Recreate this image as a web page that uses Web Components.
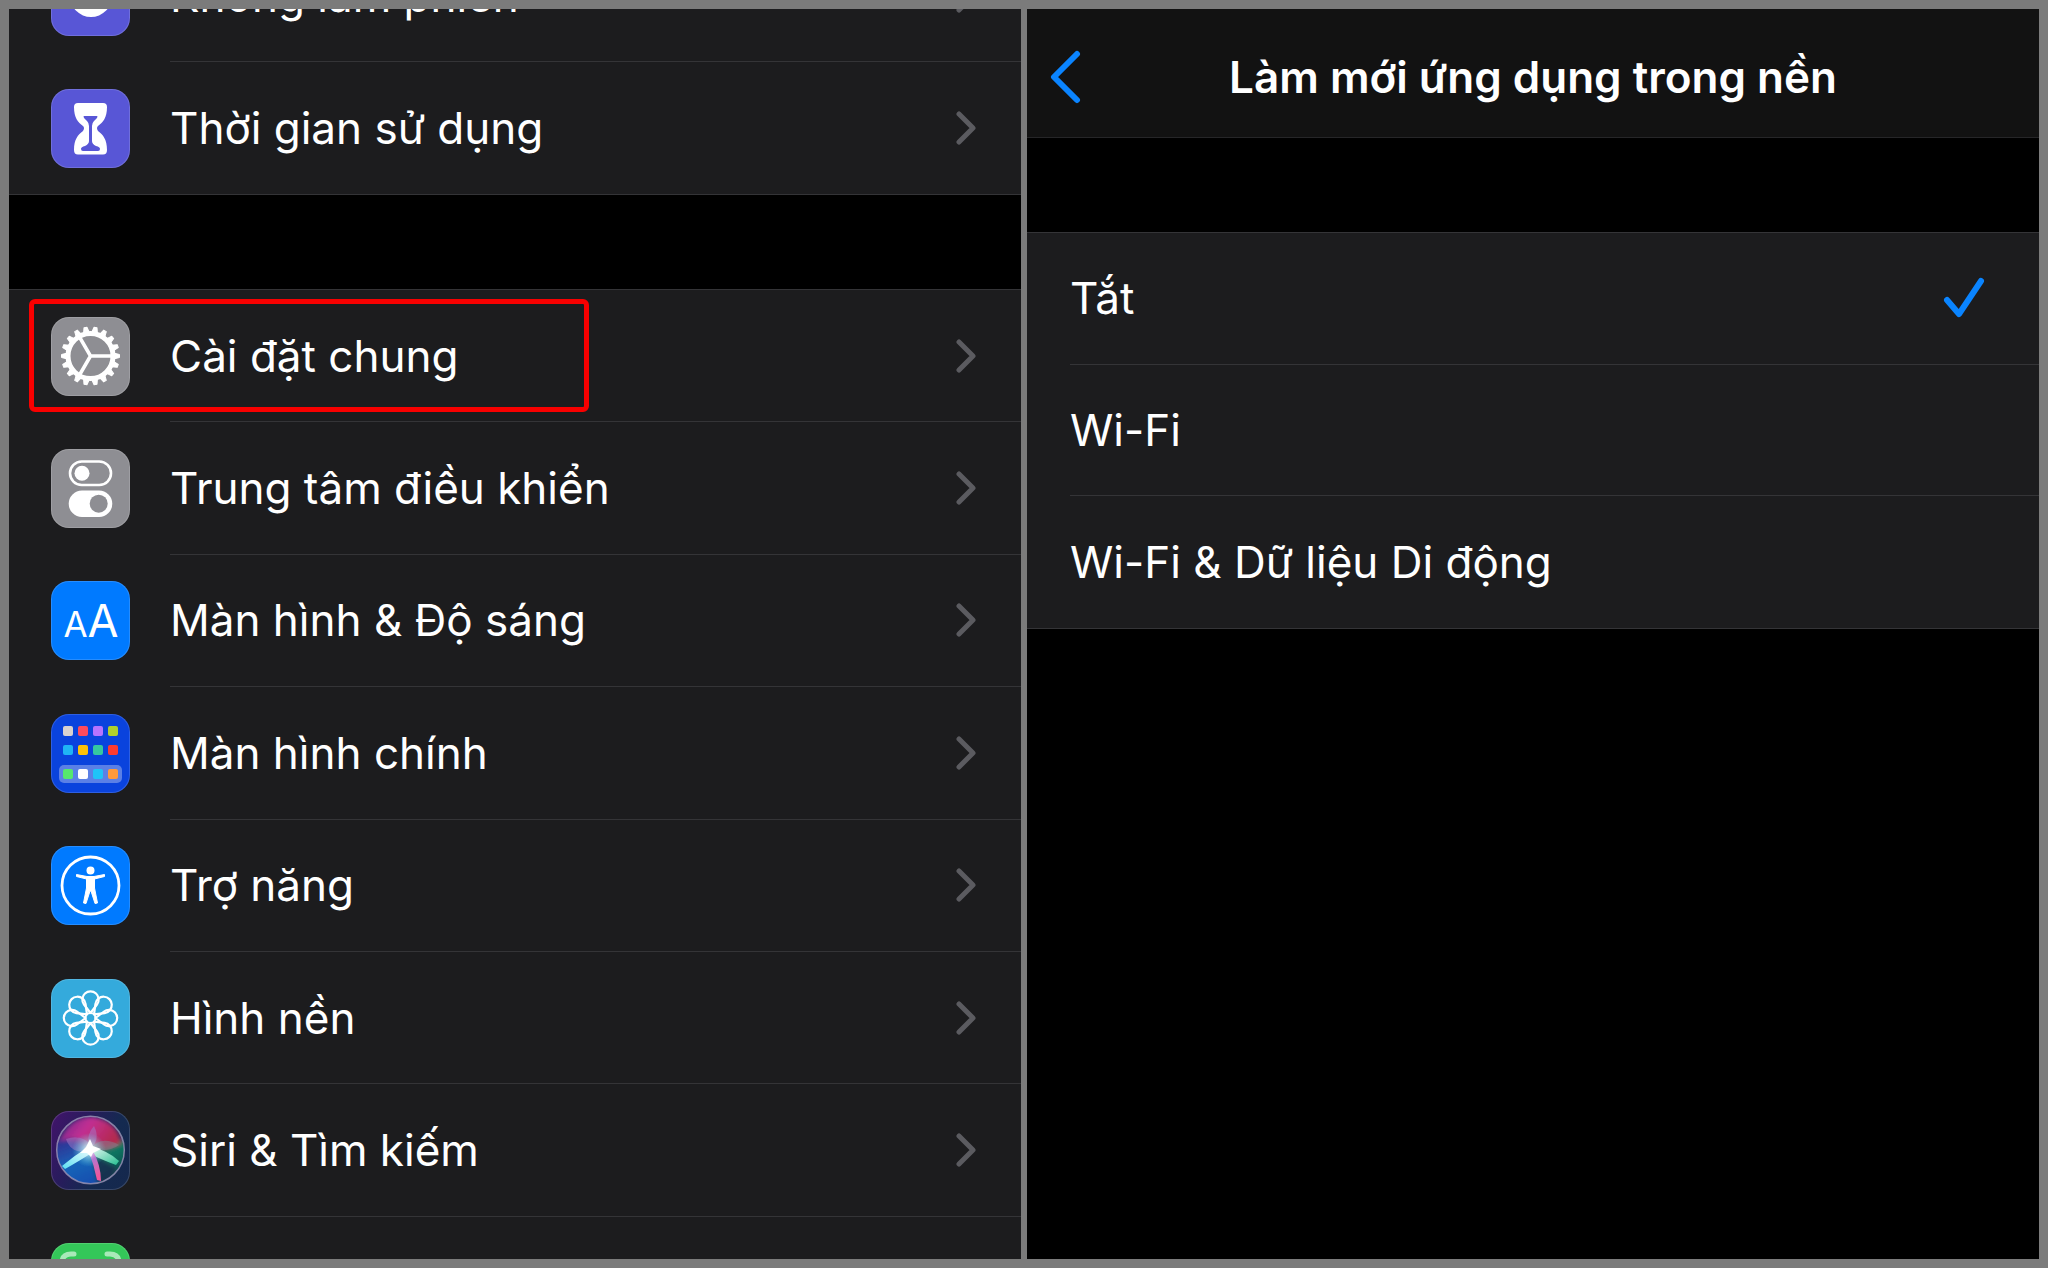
<!DOCTYPE html>
<html lang="vi">
<head>
<meta charset="utf-8">
<meta name="viewport" content="width=device-width, initial-scale=1">
<title>Cài đặt</title>
<style>
  html, body { margin: 0; height: 100%; }
  body {
    background: #7b7b7b;
    color: #fff;
    font-family: Inter, "Noto Sans", sans-serif;
    font-size: 44px;
    line-height: 54px;
  }
</style>
</head>
<body>
<split-view>
  <phone-screen>
    <row-group class="scrolled">
      <settings-row icon="moon">Không làm phiền</settings-row>
      <settings-row icon="hourglass">Thời gian sử dụng</settings-row>
    </row-group>
    <row-group class="long">
      <settings-row icon="gear" marked>Cài đặt chung</settings-row>
      <settings-row icon="toggles">Trung tâm điều khiển</settings-row>
      <settings-row icon="display">Màn hình &amp; Độ sáng</settings-row>
      <settings-row icon="home">Màn hình chính</settings-row>
      <settings-row icon="access">Trợ năng</settings-row>
      <settings-row icon="flower">Hình nền</settings-row>
      <settings-row icon="siri">Siri &amp; Tìm kiếm</settings-row>
      <settings-row icon="scan"></settings-row>
    </row-group>
  </phone-screen>
  <phone-screen>
    <nav-bar>Làm mới ứng dụng trong nền</nav-bar>
    <row-group class="short">
      <choice-row checked>Tắt</choice-row>
      <choice-row>Wi-Fi</choice-row>
      <choice-row>Wi-Fi &amp; Dữ liệu Di động</choice-row>
    </row-group>
  </phone-screen>
</split-view>

<script>
const define = (name, html, setup) => customElements.define(name, class extends HTMLElement {
  constructor() {
    super();
    this.attachShadow({ mode: 'open' }).innerHTML = html;
  }
  connectedCallback() {
    if (setup && !this.ready) setup(this, this.shadowRoot);
    this.ready = true;
  }
});

const around = (n, draw) => Array.from({ length: n }, (_, i) => draw(i * 360 / n)).join('');

const homeColors = [
  ['#d9d2d0', '#ff4b5c', '#b673ff', '#b0d02c'],
  ['#1fb4f5', '#ffc107', '#35c8a0', '#ff3b30'],
  ['#56e86e', '#ffffff', '#1fc3f8', '#ff9a3c']
];

const icons = {
  moon: ['#5856d6', `<circle cx="40" cy="39" r="21" fill="#fff"/><circle cx="50" cy="27" r="17" fill="#5856d6"/>`],
  hourglass: ['#5856d6', `
    <path fill="#fff" d="M27 14H52Q56 14 56 18C56 29 52 33 47 37Q45 39 47 42C52 46 56 50 56 61Q56 65.500 52 65.500H27Q23 65.500 23 61C23 50 27 46 32 42Q34 39 32 37C27 33 23 29 23 18Q23 14 27 14Z"/>
    <path fill="#5856d6" d="M33 27H46Q47 27 46 29L43 32Q41 34 41 37V52Q41 55 45 57Q49 58 49 60Q49 62 47 62H32Q30 62 30 60Q30 58 34 57Q38 55 38 52V37Q38 34 36 32L33 29Q32 27 33 27Z"/>`],
  gear: ['#8e8e93', `
    <g transform="translate(39.500 39)" fill="none" stroke="#fff">
      <circle r="22.500" stroke-width="5"/>
      <path stroke-width="3.500" d="M0 0H22M0 0L-11 -19M0 0L-11 19"/>
      ${around(18, a => `<path transform="rotate(${a})" fill="#fff" stroke-width="1" stroke-linejoin="round" d="M23 -3L29 -1.500V1.500L23 3Z"/>`)}
    </g>`],
  toggles: ['#8e8e93', `
    <rect x="19" y="12.500" width="41" height="23.500" rx="11.750" fill="none" stroke="#fff" stroke-width="2.600"/>
    <circle cx="31" cy="24.200" r="7.500" fill="#fff"/>
    <rect x="17.700" y="41.500" width="43.600" height="26.500" rx="13.250" fill="#fff"/>
    <circle cx="47.700" cy="54.700" r="9" fill="#8e8e93"/>`],
  display: ['#007aff', `
    <g fill="#fff" font-family="Inter, sans-serif" font-weight="400" text-anchor="middle">
      <text x="24.500" y="56" font-size="35">A</text><text x="52" y="56" font-size="45">A</text>
    </g>`],
  home: ['#0a43dd', `
    <rect x="8" y="51" width="63" height="18" rx="5" fill="#5b80e6"/>
    ${homeColors.map((row, r) => row.map((c, i) =>
      `<rect x="${[12, 27, 42, 57][i]}" y="${[12, 31, 55][r]}" width="10" height="10" rx="2" fill="${c}"/>`).join('')).join('')}`],
  access: ['#007aff', `
    <circle cx="39.500" cy="39.500" r="28.500" fill="none" stroke="#fff" stroke-width="2.800"/>
    <circle cx="39.500" cy="24.500" r="4" fill="#fff"/>
    <path fill="#fff" stroke="#fff" stroke-linejoin="round" d="M25.500 28.500L36 30.500H43L53.500 28.500V30.500L43.500 33V42L46.500 57L44 57.500L40 45H39L35 57.500L32.500 57L35.500 42V33L25.500 30.500Z"/>`],
  flower: ['#34aadc', `
    <g transform="translate(39.500 39)" fill="none" stroke="#fff" stroke-width="2.200" stroke-linejoin="round">
      <circle r="5"/>
      ${around(8, a => `<path transform="rotate(${a})" d="M0 -5L-6.500 -13.500A8.200 8.200 0 1 1 6.500 -13.500Z"/>`)}
    </g>`],
  siri: ['linear-gradient(115deg, #43136b 0%, #281c5c 35%, #142a50 65%, #15284d 100%)', `
    <defs>
      <radialGradient id="glow"><stop offset="0" stop-color="#fff"/><stop offset=".3" stop-color="#c8fff8" stop-opacity=".8"/><stop offset="1" stop-color="#58d8e8" stop-opacity="0"/></radialGradient>
      <linearGradient id="top" x1="0" x2="1" y2=".4"><stop offset="0" stop-color="#6a2590"/><stop offset=".5" stop-color="#c22f92"/><stop offset="1" stop-color="#b32a4f"/></linearGradient>
      <linearGradient id="left" x1=".2" x2=".6" y2="1"><stop offset="0" stop-color="#352a8e"/><stop offset=".5" stop-color="#1764b8"/><stop offset="1" stop-color="#1647ac"/></linearGradient>
      <linearGradient id="right" x2=".6" y2="1"><stop offset="0" stop-color="#5c6b73"/><stop offset=".4" stop-color="#0d7560"/><stop offset="1" stop-color="#16233f"/></linearGradient>
      <linearGradient id="ray" x1="1" x2="0" y2="1"><stop offset="0" stop-color="#fff"/><stop offset="1" stop-color="#59dff2"/></linearGradient>
      <linearGradient id="leaf" x2="1" y2="1"><stop offset="0" stop-color="#fff"/><stop offset="1" stop-color="#25bf8f"/></linearGradient>
      <linearGradient id="tail" x2=".3" y2="1"><stop offset="0" stop-color="#fff"/><stop offset=".4" stop-color="#b477cf"/><stop offset="1" stop-color="#f0569c"/></linearGradient>
      <filter id="wide" x="-20%" y="-20%" width="140%" height="140%"><feGaussianBlur stdDeviation="2"/></filter>
      <filter id="fine" x="-20%" y="-20%" width="140%" height="140%"><feGaussianBlur stdDeviation=".6"/></filter>
      <clipPath id="orb"><circle cx="39.500" cy="39" r="33.500"/></clipPath>
    </defs>
    <g clip-path="url(#orb)">
      <rect width="79" height="79" fill="#252b68"/>
      <g filter="url(#wide)">
        <path fill="url(#left)" d="M-6 30Q20 24 39 38L50 85H-6Z"/>
        <path fill="url(#right)" d="M39 38Q56 24 85 32V85H49Z"/>
        <path fill="#18294f" opacity=".8" d="M41 42L66 57L56 77L48 75Z"/>
        <path fill="url(#top)" d="M8 30Q20 4 43 6Q67 11 70 32Q57 38 39 38Q28 24 8 30Z"/>
      </g>
      <g filter="url(#fine)">
        <path fill="#a478c8" opacity=".5" d="M15 28Q33 22 43 38Q21 46 15 28ZM39 39Q34 25 43 15Q50 28 39 39Z"/>
        <path fill="#8a7488" opacity=".6" d="M39 38Q50 24 68 34Q57 42 39 38Z"/>
        <circle cx="38" cy="39" r="17" fill="url(#glow)" opacity=".8"/>
        <path fill="url(#ray)" d="M39 35Q24 44 11 55L14 58Q30 49 42 41Z"/>
        <path fill="url(#leaf)" d="M38 35Q58 40 68 50L65 54Q49 48 37 42Z"/>
        <path fill="url(#tail)" d="M37 38Q43 54 46 69L50 70Q50 54 41 38Z"/>
        <path fill="#fff" d="M39 28L42 35L50 38L42 42L40 46L36 42L29 42L35 36Z"/>
      </g>
    </g>
    <circle cx="39.500" cy="39" r="33.800" fill="none" stroke="#a7a0c0" stroke-opacity=".75" stroke-width="1.500"/>`],
  scan: ['#34c759', `
    <path fill="none" stroke="#a9e9b9" stroke-width="5" stroke-linecap="round" d="M23 11H20Q11 11 11 20V24M56 11H59Q68 11 68 20V24M11 55V59Q11 68 20 68H23M68 55V59Q68 68 59 68H56"/>`]
};

define('split-view', `<style>
  :host { box-sizing: border-box; display: grid; grid-template-columns: 1fr 1fr; gap: 6px; height: 100vh; padding: 9px; }
</style><slot></slot>`);

define('phone-screen', `<style>
  :host { display: flex; flex-direction: column; gap: 94px; min-width: 0; overflow: hidden; background: #000; }
</style><slot></slot>`);

define('row-group', `<style>
  :host { box-sizing: border-box; flex: none; display: grid; grid-auto-rows: 1fr; background: #1c1c1e; border: solid #343437; border-width: 1px 0; }
  :host(.scrolled) { height: 266px; margin-top: -80px; }
  :host(.long) { height: 1061px; }
  :host(.short) { height: 397px; }
</style><slot></slot>`);

define('app-icon', `<style>
  :host { display: block; width: 79px; height: 79px; border-radius: 18px; overflow: hidden; box-shadow: inset 0 0 0 1px rgba(255, 255, 255, .15); }
  svg { display: block; width: 100%; height: 100%; }
</style>`, (el, root) => {
  const [fill, drawing] = icons[el.getAttribute('name')];
  el.style.background = fill;
  root.innerHTML += `<svg viewBox="0 0 79 79" aria-hidden="true">${drawing}</svg>`;
});

define('settings-row', `<style>
  :host { display: grid; position: relative; }
  a { display: flex; align-items: center; gap: 40px; padding-left: 42px; color: inherit; text-decoration: none; }
  .body { flex: 1; align-self: stretch; display: flex; align-items: center; justify-content: space-between; padding-right: 44px; border-bottom: 1px solid #343437; }
  :host(:last-of-type) .body { border-color: transparent; }
  svg { width: 21px; height: 34px; fill: none; stroke: #5b5b60; stroke-width: 5; stroke-linecap: round; stroke-linejoin: round; }
  .mark { display: none; }
  :host([marked]) .mark { display: block; position: absolute; box-sizing: border-box; left: 20px; top: 9px; width: 560px; height: 113px; border: 5px solid #f80000; border-radius: 6px; pointer-events: none; }
</style>
<a href="#"><span class="body"><span><slot></slot></span><svg viewBox="0 0 21 34" aria-hidden="true"><path d="M3 3L17 17L3 31"/></svg></span></a>
<span class="mark"></span>`, (el, root) => {
  const icon = document.createElement('app-icon');
  icon.setAttribute('name', el.getAttribute('icon'));
  root.querySelector('a').prepend(icon);
});

define('nav-bar', `<style>
  :host { box-sizing: border-box; display: grid; grid-template-columns: 80px 1fr 80px; align-items: center; height: 129px; padding-top: 8px; background: #121212; border-bottom: 1px solid #262628; }
  button { justify-self: start; margin: 0 0 0 21px; padding: 0; border: 0; background: none; }
  svg { display: block; width: 34px; height: 54px; fill: none; stroke: #0a84ff; stroke-width: 6; stroke-linecap: round; stroke-linejoin: round; }
  h1 { margin: 0; font-size: inherit; font-weight: 600; text-align: center; white-space: nowrap; }
</style>
<button type="button" aria-label="Quay lại"><svg viewBox="0 0 34 54"><path d="M29 4L6 27L29 50"/></svg></button>
<h1><slot></slot></h1>`);

define('choice-row', `<style>
  :host { display: grid; padding-left: 43px; }
  label { display: flex; align-items: center; justify-content: space-between; padding-right: 54px; border-bottom: 1px solid #343437; }
  :host(:last-of-type) label { border-color: transparent; }
  input { appearance: none; width: 0; height: 0; margin: 0; order: 2; }
  .text { flex: 1; }
  svg { display: none; width: 42px; height: 42px; fill: none; stroke: #0a84ff; stroke-width: 6; stroke-linecap: round; stroke-linejoin: round; }
  input:checked ~ svg { display: block; }
</style>
<label><input type="radio" name="refresh"><span class="text"><slot></slot></span><svg viewBox="0 0 42 42" aria-hidden="true"><path d="M4 23L16 37L38 4"/></svg></label>`,
(el, root) => { root.querySelector('input').checked = el.hasAttribute('checked'); });
</script>
</body>
</html>
